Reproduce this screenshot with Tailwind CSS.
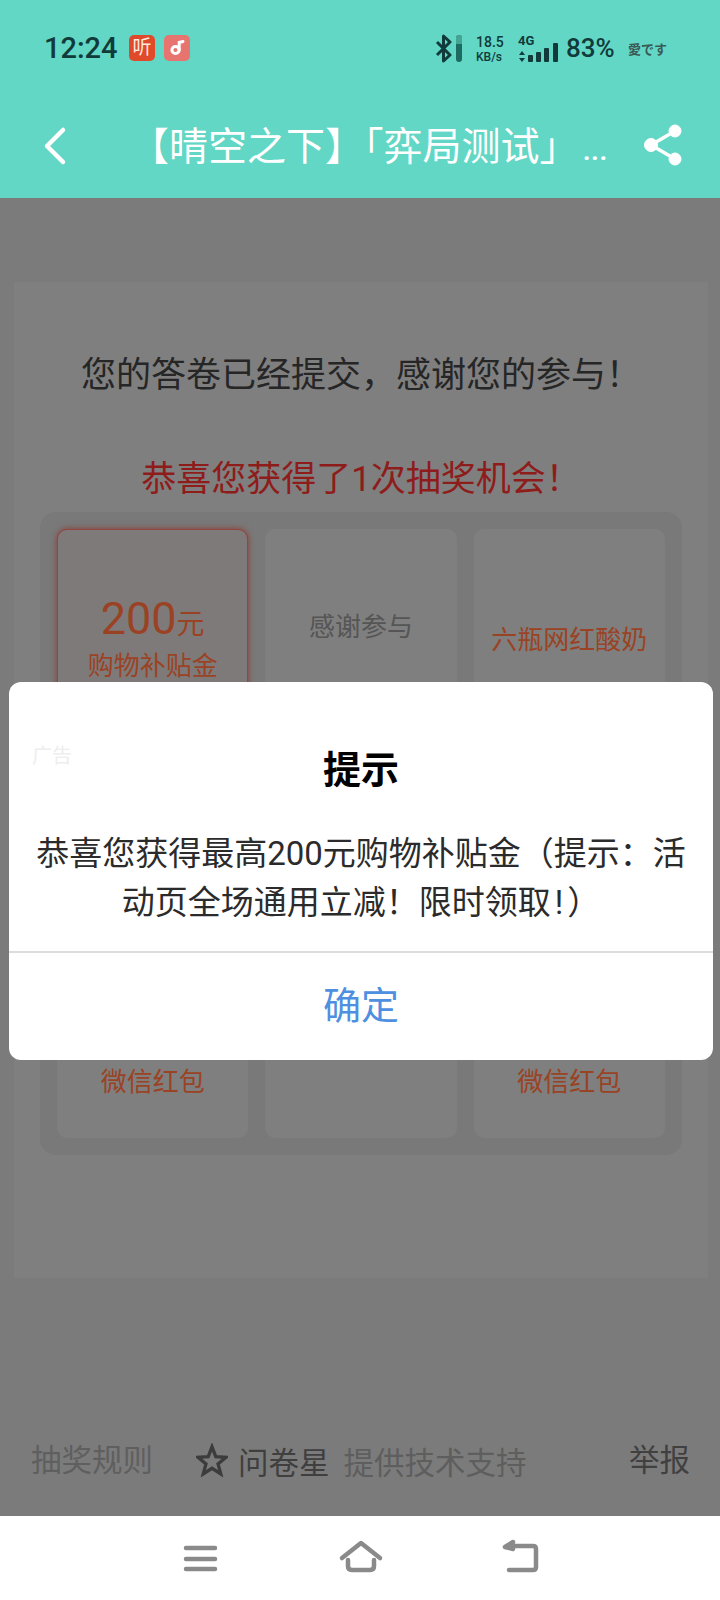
<!DOCTYPE html>
<html lang="zh-CN">
<head>
  <meta charset="UTF-8" />
  <meta name="viewport" content="width=device-width, initial-scale=1.0"/>
  <title>问卷星</title>
  <script src="https://cdn.jsdelivr.net/npm/@tailwindcss/browser@4"></script>
</head>
<body class="font-['Roboto','Noto_Sans_CJK_SC',sans-serif]">
  <div class="relative w-[720px] h-[1600px] flex flex-col overflow-hidden bg-[#7b7b7b]">

    <!-- header -->
    <header class="h-[198px] shrink-0 bg-[#62d7c5]">
      <div class="h-[98px] relative text-[#113a3a]">
        <span class="absolute left-[44px] top-[30px] text-[29px] leading-[36px] font-medium">12:24</span>
        <span class="absolute left-[129px] top-[35px] w-[26px] h-[26px] rounded-[5px] bg-[#e04a2a] text-[#ffe9df] text-[19px] leading-[26px] text-center">听</span>
        <span class="absolute left-[164px] top-[35px] w-[26px] h-[26px] rounded-[5px] bg-[#e87470] flex items-center justify-center">
          <svg width="18" height="18" viewBox="0 0 18 18" fill="none" stroke="#fff" stroke-width="3" stroke-linecap="round"><circle cx="7.5" cy="11" r="3.6"/><path d="M11.2 11V3.5L15 2.5"/></svg>
        </span>
        <svg class="absolute left-[435px] top-[34px]" width="18" height="29" viewBox="0 0 18 29" fill="none" stroke="#113a3a" stroke-width="3" stroke-linejoin="round"><path d="M2 8l13 13-6.5 6V2L15 8 2 21"/></svg>
        <span class="absolute left-[456px] top-[35px] w-[6px] h-[27px] rounded-[3px] bg-[#1d6b60] overflow-hidden"><span class="block h-[9px] bg-[#45a595]"></span></span>
        <span class="absolute left-[476px] top-[35px] text-[14px] leading-[14px] font-medium">18.5</span>
        <span class="absolute left-[476px] top-[50px] text-[12px] leading-[14px] font-medium">KB/s</span>
        <span class="absolute left-[518px] top-[34px] text-[13px] leading-[14px] font-bold">4G</span>
        <svg class="absolute left-[518px] top-[42px]" width="42" height="21" viewBox="0 0 42 21" fill="#113a3a"><path d="M4 9l3 4H1zM4 20l3-4H1z"/><rect x="10" y="13" width="5" height="7" rx="1"/><rect x="18" y="10" width="5" height="10" rx="1"/><rect x="26" y="6" width="5" height="14" rx="1"/><rect x="35" y="1" width="5" height="19" rx="1"/></svg>
        <span class="absolute left-[566px] top-[30px] text-[26px] leading-[36px] font-medium">83%</span>
        <span class="absolute left-[628px] top-[39px] text-[13px] leading-[20px] font-bold text-[#3a5a55] font-['Noto_Sans_CJK_JP']">愛です</span>
      </div>
      <div class="h-[100px] flex items-start text-white relative">
        <svg class="absolute left-[42px] top-[28px]" width="26" height="40" viewBox="0 0 26 40" fill="none" stroke="#fff" stroke-width="4.5" stroke-linecap="round" stroke-linejoin="round"><path d="M21 4L5 20l16 16"/></svg>
        <h1 class="ml-[130px] w-[490px] text-[39px] leading-[98px] whitespace-nowrap">【晴空之下】「弈局测试」<span class="ml-[4px] text-[30px] font-medium">...</span></h1>
        <svg class="absolute left-[644px] top-[26px]" width="38" height="42" viewBox="0 0 38 42" fill="#fff" stroke="#fff"><circle cx="31" cy="7" r="6"/><circle cx="7" cy="21" r="6.5"/><circle cx="31" cy="35" r="6"/><path d="M31 7L7 21l24 14" fill="none" stroke-width="3.5"/></svg>
      </div>
    </header>

    <!-- survey page, dimmed -->
    <main class="flex-1 pl-[14px] pr-[12px] pt-[84px]">
      <section class="h-[996px] bg-[#7f7f7f] pt-[72px]">
        <p class="text-[35px] leading-[44px] text-center text-[#262626]">您的答卷已经提交，感谢您的参与！</p>
        <p class="mt-[60px] text-[35px] leading-[44px] text-center text-[#8e1c1a]">恭喜您获得了1次抽奖机会！</p>
        <div class="mt-[10px] mx-[26px] h-[643px] rounded-[16px] bg-[#797979] p-[17px] grid grid-cols-3 grid-rows-3 gap-[17px]">
          <div class="rounded-[10px] bg-[#7f7a7a] border border-[#94453e] shadow-[0_0_6px_#8a3a33] flex flex-col items-center text-[#9a4324] pt-[64px]">
            <div class="text-[45px] leading-[50px]">200<span class="text-[28px]">元</span></div>
            <div class="text-[26px] leading-[32px]">购物补贴金</div>
          </div>
          <div class="rounded-[10px] bg-[#7f7f7f] flex items-center justify-center pt-[6px] text-[26px] text-[#555555]">感谢参与</div>
          <div class="rounded-[10px] bg-[#7f7f7f] flex items-center justify-center pt-[32px] text-[26px] text-[#9a4324]">六瓶网红酸奶</div>
          <div class="rounded-[10px] bg-[#7f7f7f]"></div>
          <div class="rounded-[10px] bg-[#7f7f7f]"></div>
          <div class="rounded-[10px] bg-[#7f7f7f]"></div>
          <div class="rounded-[10px] bg-[#7f7f7f] flex items-center justify-center pt-[80px] text-[26px] text-[#9a4324]">微信红包</div>
          <div class="rounded-[10px] bg-[#7f7f7f]"></div>
          <div class="rounded-[10px] bg-[#7f7f7f] flex items-center justify-center pt-[80px] text-[26px] text-[#9a4324]">微信红包</div>
        </div>
      </section>
      <footer class="mt-[158px] flex items-center pl-[17px] pr-[18px] h-[50px] text-[30.5px]">
        <span class="text-[#5f5f5f]">抽奖规则</span>
        <svg class="ml-[43px] -mt-[2px]" width="32" height="34" viewBox="0 0 34 34" fill="none" stroke="#3c3c3c" stroke-width="3.500" stroke-linejoin="miter"><path d="M17 3l4 10.500 11 .6-8.600 7 2.900 10.700L17 25.800l-9.300 6 2.900-10.700-8.600-7 11-.6z"/></svg>
        <span class="ml-[10px] mt-[5px] text-[#3f3f3f]">问卷星</span>
        <span class="ml-[14px] mt-[5px] text-[#5e5e5e]">提供技术支持</span>
        <span class="ml-auto text-[#404040]">举报</span>
      </footer>
    </main>

    <!-- nav bar -->
    <nav class="h-[84px] shrink-0 bg-white relative">
      <svg class="absolute left-[180px] top-[20px]" width="360" height="40" viewBox="0 0 360 40" fill="none" stroke="#8a8a8a" stroke-width="4.500" stroke-linecap="round" stroke-linejoin="round">
        <path d="M6 12h29M6 23h29M6 33h29"/>
        <path d="M162 22l19-15 19 15M168 24v6q0 4 4 4h18q4 0 4-4v-6"/>
        <path d="M330 10h23q3 0 3 3v18q0 3-3 3h-24M333 6l-8 5 8 2"/>
      </svg>
    </nav>

    <!-- dialog -->
    <div class="absolute left-[9px] top-[682px] w-[704px] h-[378px] bg-white rounded-[12px] flex flex-col">
      <span class="absolute left-[23px] top-[60px] text-[20px] leading-[28px] text-[#eeeeee]">广告</span>
      <h2 class="mt-[64px] text-center text-[38px] leading-[48px] font-bold text-black">提示</h2>
      <p class="mt-[35px] text-[33px] leading-[49px] text-center text-[#2b2b2b] whitespace-nowrap">恭喜您获得最高200元购物补贴金（提示：活<br>动页全场通用立减！限时领取<span class="px-[4px]">!</span>）</p>
      <button class="mt-[24px] border-t-2 border-[#dcdcdc] flex-1 text-[38px] text-[#4f8fe0]">确定</button>
    </div>
  </div>
</body>
</html>
